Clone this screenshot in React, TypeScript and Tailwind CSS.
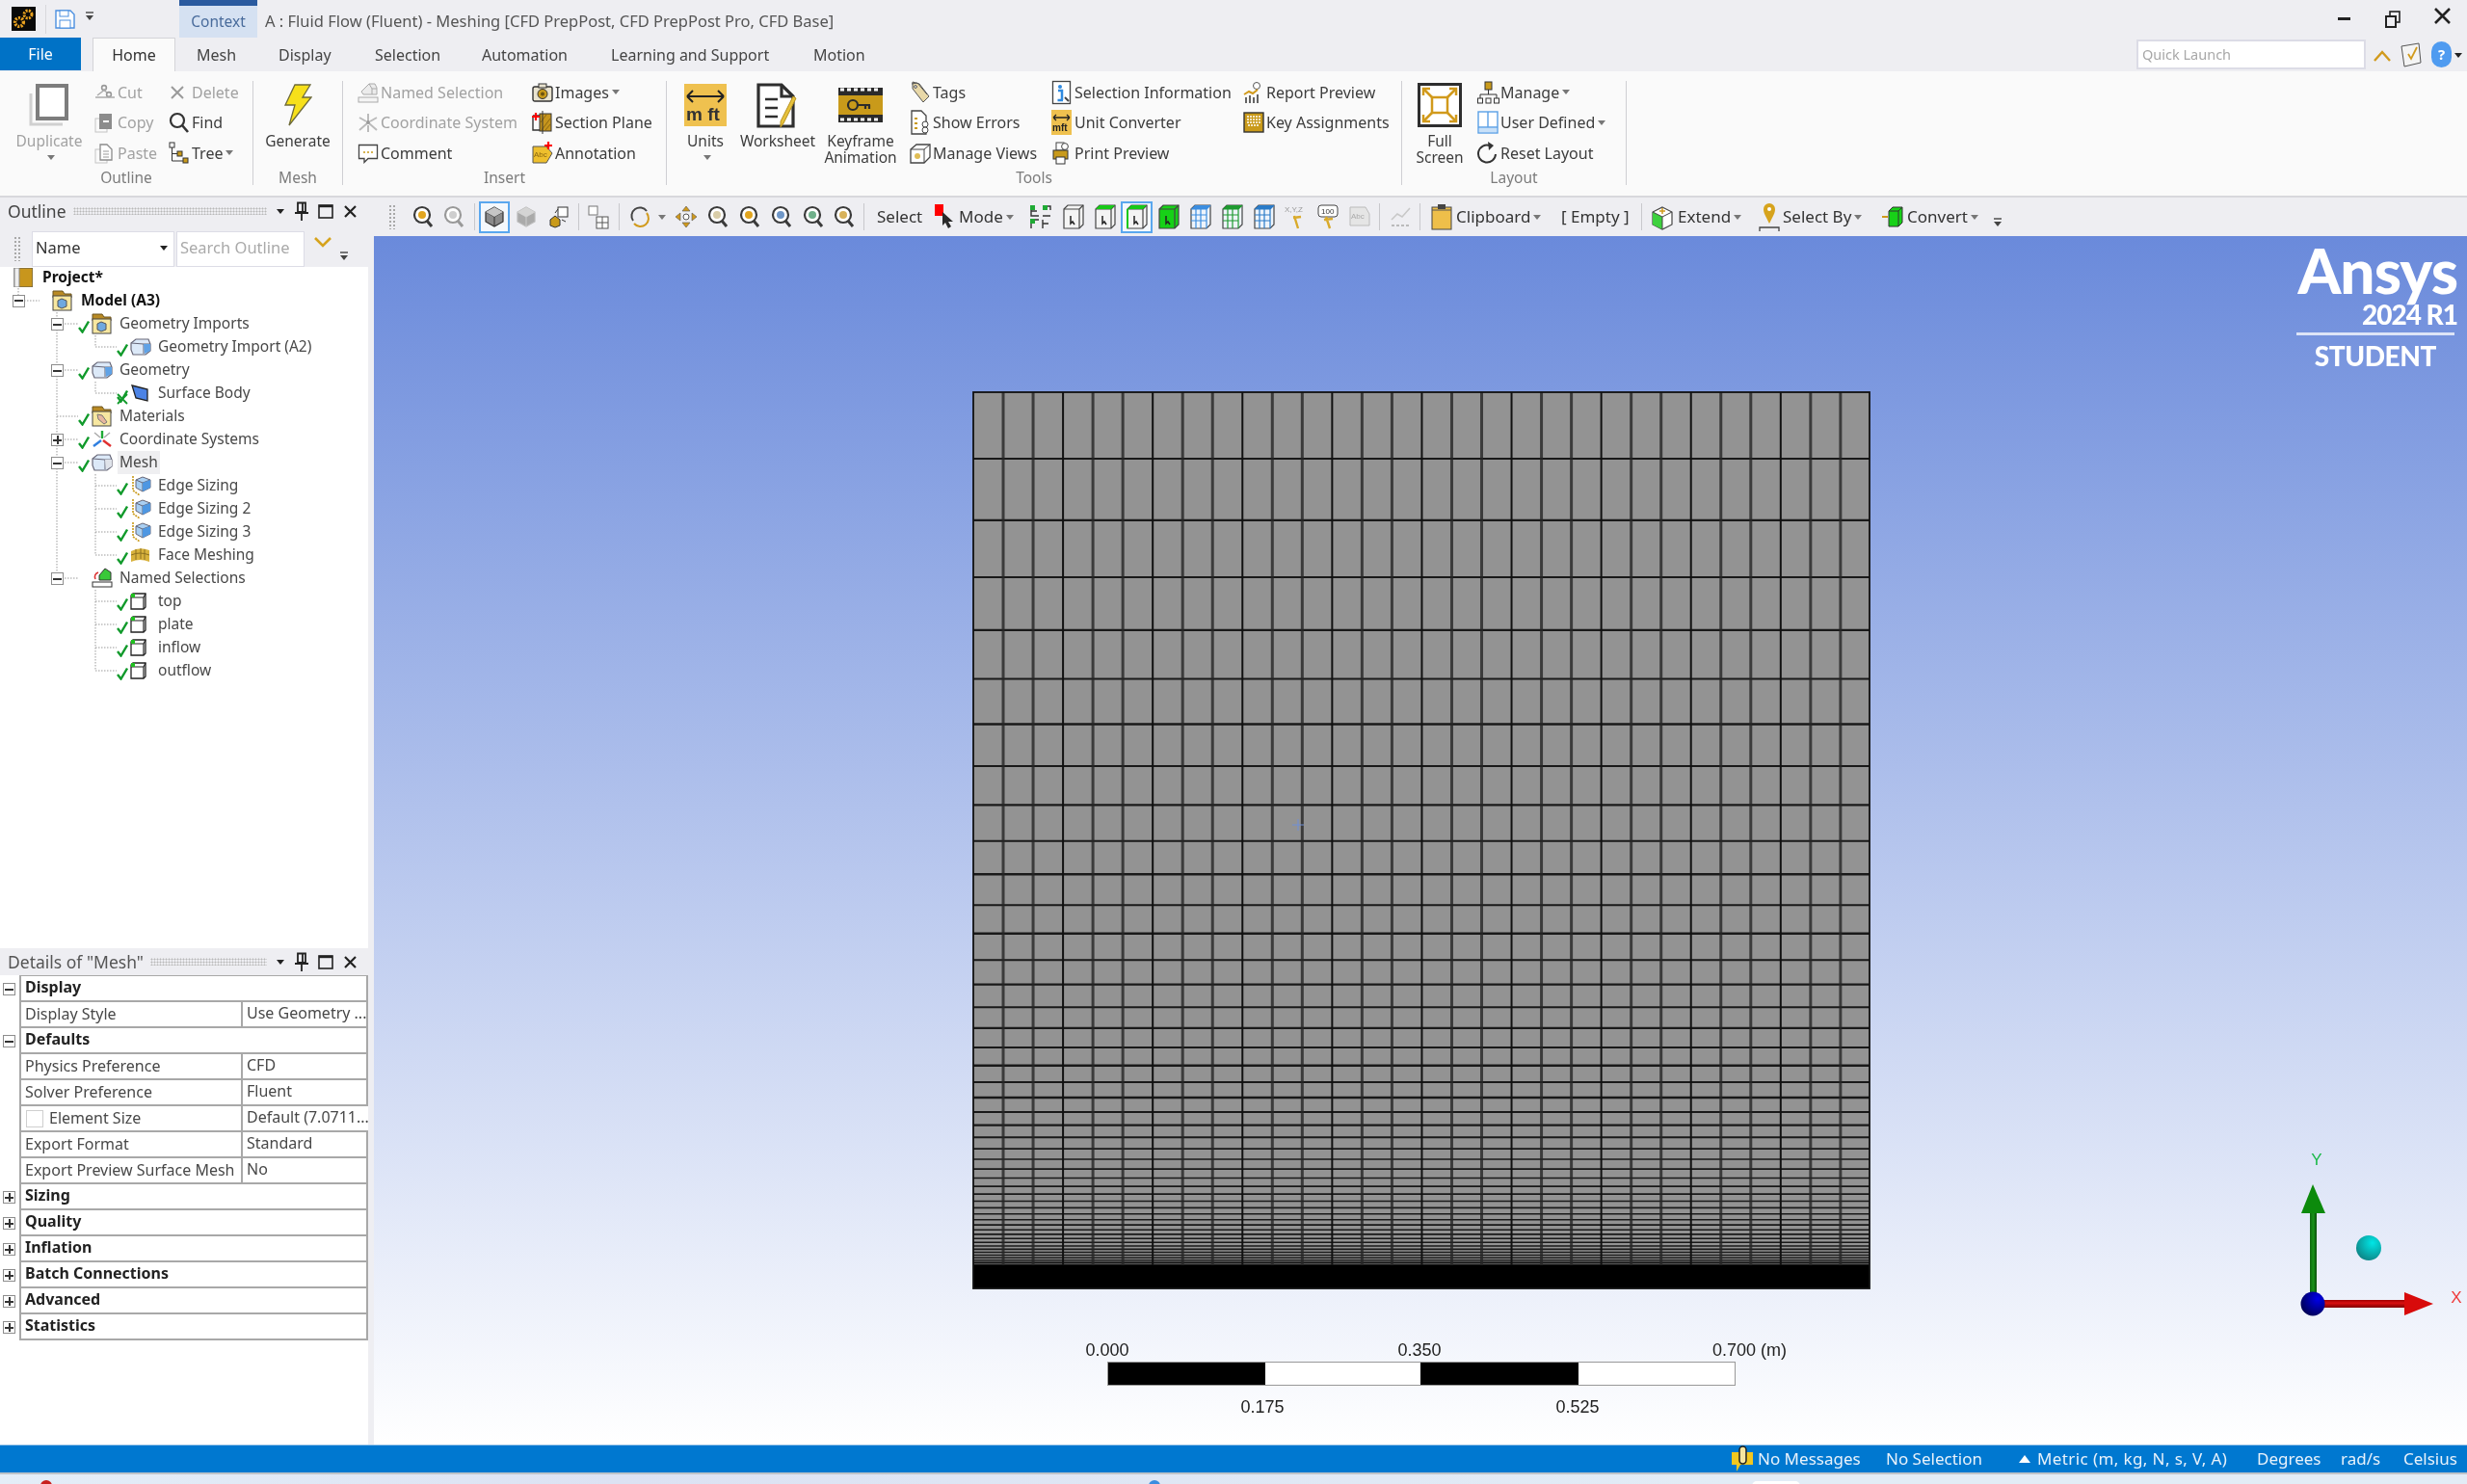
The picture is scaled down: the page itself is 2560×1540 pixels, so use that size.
import React from 'react';

type IconProps = { size?: number };

const Chk = () => (
  <svg width="12" height="14" viewBox="0 0 12 14" className="shrink-0">
    <path d="M1 8 L4.5 12.5 L11 1.5" fill="none" stroke="#119a2b" strokeWidth="2.4" />
  </svg>
);

const Arrow = ({ dark = false }: { dark?: boolean }) => (
  <svg width="8" height="5" viewBox="0 0 8 5" className="shrink-0 ml-[3px]">
    <path d="M0 0 H8 L4 5 Z" fill={dark ? '#222' : '#777'} />
  </svg>
);

// ---------- ribbon icons ----------
const CutIcon = () => (
  <svg width="22" height="20" viewBox="0 0 22 20">
    <circle cx="10" cy="5" r="2.4" fill="none" stroke="#999" strokeWidth="1.6" />
    <circle cx="15" cy="12" r="2.4" fill="none" stroke="#999" strokeWidth="1.6" />
    <path d="M3 13 L12 6 M9 7 L13 10 M1 15 H21" stroke="#aaa" strokeWidth="1.5" fill="none" />
  </svg>
);
const CopyIcon = () => (
  <svg width="20" height="22" viewBox="0 0 20 22">
    <rect x="1" y="7" width="12" height="14" fill="none" stroke="#c4c4c4" />
    <rect x="5" y="2" width="13" height="16" fill="#8c8c8c" />
    <rect x="9" y="9" width="6" height="2" fill="#fff" />
  </svg>
);
const PasteIcon = () => (
  <svg width="20" height="22" viewBox="0 0 20 22">
    <rect x="1" y="7" width="12" height="14" fill="none" stroke="#c4c4c4" />
    <path d="M6 2 H13 L18 7 V18 H6 Z" fill="#fff" stroke="#8c8c8c" strokeWidth="1.3" />
    <path d="M9 9 H15 M9 12 H15 M9 15 H15" stroke="#999" />
  </svg>
);
const DeleteIcon = () => (
  <svg width="18" height="18" viewBox="0 0 18 18">
    <path d="M3 3 L15 15 M15 3 L3 15" stroke="#9a9a9a" strokeWidth="2" />
  </svg>
);
const FindIcon = () => (
  <svg width="21" height="22" viewBox="0 0 21 22">
    <circle cx="9" cy="9" r="7" fill="none" stroke="#333" strokeWidth="2.2" />
    <path d="M14 14 L20 21" stroke="#333" strokeWidth="2.6" />
  </svg>
);
const TreeIcon = () => (
  <svg width="22" height="24" viewBox="0 0 22 24">
    <rect x="1" y="1" width="5" height="5" fill="#fff" stroke="#333" />
    <rect x="9" y="10" width="5" height="5" fill="#c99a1a" stroke="#333" />
    <rect x="15" y="17" width="5" height="5" fill="#c99a1a" stroke="#333" />
    <path d="M3.5 6 V12.5 H9 M3.5 12 V20 H15" fill="none" stroke="#333" />
  </svg>
);
const NamedSelIcon = ({ size = 22 }: IconProps) => (
  <svg width={size} height={size} viewBox="0 0 22 22">
    <path d="M4 10 L12 2 H18 L20 6 V13 H6 Z" fill="#ececec" stroke="#aaa" />
    <path d="M12 2 L15 7 H20 M15 7 V13" fill="none" stroke="#aaa" />
    <rect x="1" y="16" width="20" height="5" fill="#f4f4f4" stroke="#aaa" />
  </svg>
);
const CoordIcon = () => (
  <svg width="22" height="22" viewBox="0 0 22 22">
    <path d="M11 10 V2 M10 12 L2 19 M12 12 L20 19 M2 6 L9 10 M20 6 L13 10 M11 14 V21" stroke="#bbb" strokeWidth="2" />
    <circle cx="11" cy="11" r="2" fill="#999" />
  </svg>
);
const CommentIcon = () => (
  <svg width="22" height="22" viewBox="0 0 22 22">
    <path d="M1.5 2.5 H20.5 V16.5 H11 L7 20.5 V16.5 H1.5 Z" fill="#fff" stroke="#444" strokeWidth="1.3" />
    <path d="M6 10 H8 M10 10 H12 M14 10 H16" stroke="#c99a1a" strokeWidth="1.4" />
  </svg>
);
const ImagesIcon = () => (
  <svg width="22" height="20" viewBox="0 0 22 20">
    <rect x="1" y="4" width="20" height="15" rx="2" fill="#e9e3cf" stroke="#333" strokeWidth="1.4" />
    <rect x="7" y="1" width="8" height="4" fill="#e9e3cf" stroke="#333" />
    <circle cx="11" cy="11.5" r="5" fill="#c99a1a" stroke="#333" />
    <circle cx="11" cy="11.5" r="2" fill="#6b5310" />
  </svg>
);
const SectionIcon = () => (
  <svg width="22" height="24" viewBox="0 0 22 24">
    <path d="M1 5 H12 M1 5 V20 H12" fill="none" stroke="#333" strokeWidth="1.4" />
    <rect x="8" y="3" width="12" height="18" fill="#c6951d" stroke="#333" />
    <path d="M9 12 L15 4 M10 20 L19 8 M14 20 L19 14" stroke="#8a6610" />
    <path d="M11 0 V24" stroke="#333" />
    <path d="M4 2 V10 M0 6 H8" stroke="#f00" strokeWidth="2.2" />
  </svg>
);
const AnnotIcon = () => (
  <svg width="22" height="24" viewBox="0 0 22 24">
    <path d="M1 5 H15 L21 12 L15 22 H1 Z" fill="#eebf2d" stroke="#555" />
    <text x="2" y="16" fontSize="8" fill="#8a6610" fontFamily="Liberation Sans">Abc</text>
    <path d="M17 0 V8 M13 4 H21" stroke="#f00" strokeWidth="2.2" />
  </svg>
);
const TagsIcon = () => (
  <svg width="22" height="24" viewBox="0 0 22 24">
    <path d="M3 1 L10 3 L20 16 L14 22 L3 8 Z" fill="#e8d8a8" stroke="#555" />
    <path d="M2 3 L8 2 L18 14" fill="none" stroke="#555" />
    <circle cx="6" cy="6" r="1.4" fill="#fff" stroke="#555" />
  </svg>
);
const ErrorsIcon = () => (
  <svg width="22" height="26" viewBox="0 0 22 26">
    <path d="M2 1 H12 L17 6 V25 H2 Z" fill="#fff" stroke="#444" strokeWidth="1.3" />
    <path d="M5 9 H8 M5 14 H8 M5 19 H8" stroke="#c99a1a" strokeWidth="2" />
    <circle cx="16" cy="15" r="3" fill="#fff" stroke="#444" />
    <circle cx="16" cy="21" r="3" fill="#fff" stroke="#444" />
  </svg>
);
const ViewsIcon = () => (
  <svg width="22" height="22" viewBox="0 0 22 22">
    <path d="M1 7 L7 2 H21 V15 L15 21 H1 Z" fill="#fff" stroke="#444" strokeWidth="1.3" />
    <path d="M1 7 H15 V21 M15 7 L21 2" fill="none" stroke="#444" />
    <circle cx="8" cy="14" r="3" fill="#e0bd55" />
  </svg>
);
const InfoIcon = () => (
  <svg width="22" height="26" viewBox="0 0 22 26">
    <rect x="1.5" y="1.5" width="18" height="23" fill="#fff" stroke="#444" strokeWidth="1.3" />
    <circle cx="9" cy="7" r="2" fill="#2f8ae0" />
    <path d="M7 11 H11 V21 M6.5 21 H12" fill="none" stroke="#2f8ae0" strokeWidth="2.5" />
    <path d="M14 18 L18 22" stroke="#444" strokeWidth="2" />
  </svg>
);
const UnitSmallIcon = () => (
  <svg width="21" height="26" viewBox="0 0 21 26">
    <rect x="0" y="0" width="21" height="26" fill="#efc14f" />
    <path d="M2 8 H19 M2 8 L5 5 M2 8 L5 11 M19 8 L16 5 M19 8 L16 11" stroke="#222" strokeWidth="1.3" fill="none" />
    <text x="1" y="22" fontSize="10" fontWeight="700" fill="#222" fontFamily="Liberation Sans">mft</text>
  </svg>
);
const PrintIcon = () => (
  <svg width="22" height="26" viewBox="0 0 22 26">
    <rect x="5" y="2" width="8" height="8" fill="#fff" stroke="#444" />
    <circle cx="14" cy="6" r="3.4" fill="#fff" stroke="#444" />
    <rect x="2" y="10" width="15" height="9" fill="#c99a1a" stroke="#333" />
    <rect x="5" y="17" width="9" height="7" fill="#fff" stroke="#333" />
  </svg>
);
const ReportIcon = () => (
  <svg width="22" height="24" viewBox="0 0 22 24">
    <circle cx="14" cy="5" r="3.5" fill="#fff" stroke="#555" />
    <path d="M1 14 L6 11 L10 13 L15 9" fill="none" stroke="#d19a1c" strokeWidth="2" />
    <path d="M3 23 V17 M7 23 V15 M11 23 V17 M15 23 V14" stroke="#333" strokeWidth="1.5" />
  </svg>
);
const KeysIcon = () => (
  <svg width="22" height="22" viewBox="0 0 22 22">
    <rect x="1" y="1" width="20" height="20" fill="#c99a1a" stroke="#333" strokeWidth="1.4" />
    <path d="M4 5 H18 M4 8 H18 M4 11 H18 M5 14 H17" stroke="#fff" strokeWidth="1.3" strokeDasharray="2 1" />
  </svg>
);
const ManageIcon = () => (
  <svg width="23" height="24" viewBox="0 0 23 24">
    <rect x="8" y="1" width="7" height="8" fill="#c99a1a" stroke="#333" />
    <path d="M11.5 9 V14 M3 18 V14 H20 V18" fill="none" stroke="#333" />
    <rect x="0.5" y="18" width="5" height="5" fill="#fff" stroke="#333" />
    <rect x="9" y="18" width="5" height="5" fill="#fff" stroke="#333" />
    <rect x="17.5" y="18" width="5" height="5" fill="#fff" stroke="#333" />
  </svg>
);
const UserDefIcon = () => (
  <svg width="22" height="24" viewBox="0 0 22 24">
    <rect x="1" y="1" width="20" height="22" fill="#fff" stroke="#5aa0e6" strokeWidth="1.4" />
    <path d="M1 17 H21 M11 1 V17" stroke="#5aa0e6" strokeWidth="1.4" />
    <rect x="2" y="18" width="18" height="4" fill="#c8e0f8" />
  </svg>
);
const ResetIcon = () => (
  <svg width="22" height="24" viewBox="0 0 22 24">
    <path d="M13 4 A9 9 0 1 0 19 13" fill="none" stroke="#333" strokeWidth="2" />
    <path d="M11 0 L17 4 L12 9 Z" fill="#333" />
  </svg>
);
const DuplicateIcon = () => (
  <svg width="44" height="44" viewBox="0 0 44 44">
    <path d="M3 10 V42 H36" fill="none" stroke="#d0d0d0" strokeWidth="3" />
    <rect x="10" y="2" width="30" height="34" fill="#fff" stroke="#7d7d7d" strokeWidth="4" />
  </svg>
);
const BoltIcon = () => (
  <svg width="30" height="44" viewBox="0 0 30 44">
    <path d="M12 1 H28 L20 14 H29 L6 43 L12 22 H2 Z" fill="#f7e01a" stroke="#6d6a3a" strokeWidth="1.3" />
  </svg>
);
const UnitsIcon = () => (
  <svg width="44" height="44" viewBox="0 0 44 44">
    <rect width="44" height="44" fill="#efc14f" />
    <path d="M3 13 H41 M3 13 L9 7 M3 13 L9 19 M41 13 L35 7 M41 13 L35 19" stroke="#222" strokeWidth="2" fill="none" />
    <text x="2" y="38" fontSize="19" fontWeight="700" fill="#333" fontFamily="Liberation Sans">m ft</text>
  </svg>
);
const WorksheetIcon = () => (
  <svg width="44" height="47" viewBox="0 0 44 47">
    <path d="M2 2 H26 L38 14 V45 H2 Z" fill="#fff" stroke="#2e2e2e" strokeWidth="3.2" />
    <path d="M26 2 V14 H38" fill="none" stroke="#2e2e2e" strokeWidth="3.2" />
    <path d="M9 17 H22 M9 26 H22 M9 35 H22" stroke="#2e2e2e" strokeWidth="2.6" />
    <path d="M41 16 L28 42 L25 46 L25 40 L38 14 Z" fill="#e7c23c" stroke="#b58f1e" />
  </svg>
);
const KeyframeIcon = () => (
  <svg width="46" height="36" viewBox="0 0 46 36">
    <rect width="46" height="36" fill="#2b2b2b" />
    <rect x="0" y="8" width="46" height="20" fill="#c99a1a" />
    <path d="M2 2 H44 M2 33 H44" stroke="#fff" strokeWidth="3" strokeDasharray="4 3" />
    <circle cx="15" cy="18" r="5" fill="none" stroke="#2b2b2b" strokeWidth="2.2" />
    <path d="M20 18 H33 M28 18 V22 M32 18 V22" stroke="#2b2b2b" strokeWidth="2.2" />
  </svg>
);
const FullIcon = () => (
  <svg width="46" height="46" viewBox="0 0 46 46">
    <rect x="1.5" y="1.5" width="43" height="43" fill="#fff" stroke="#2e2e2e" strokeWidth="3" />
    <rect x="15" y="15" width="16" height="16" fill="none" stroke="#d19a1c" strokeWidth="2.5" />
    <path d="M15 15 L7 7 M31 15 L39 7 M15 31 L7 39 M31 31 L39 39" stroke="#d19a1c" strokeWidth="2.5" />
    <path d="M6 13 V6 H13 M33 6 H40 V13 M6 33 V40 H13 M33 40 H40 V33" fill="none" stroke="#d19a1c" strokeWidth="2.5" />
  </svg>
);
const GearLogo = () => (
  <svg width="25" height="25" viewBox="0 0 25 25">
    <rect width="25" height="25" fill="#0a0a0a" />
    <circle cx="17" cy="8" r="4" fill="none" stroke="#e9a21f" strokeWidth="3" strokeDasharray="2 1.2" />
    <circle cx="8" cy="16" r="4.4" fill="none" stroke="#e9a21f" strokeWidth="3.4" strokeDasharray="2 1.2" />
  </svg>
);
const SaveIcon = () => (
  <svg width="21" height="20" viewBox="0 0 21 20">
    <path d="M1 1 H16 L20 5 V19 H1 Z" fill="#fff" stroke="#4b8fe0" strokeWidth="1.4" />
    <rect x="5" y="1" width="9" height="6" fill="#fff" stroke="#4b8fe0" />
    <rect x="5" y="11" width="11" height="8" fill="#fff" stroke="#4b8fe0" />
  </svg>
);
const SmallCaret = () => (
  <svg width="10" height="10" viewBox="0 0 10 10">
    <path d="M1 1 H9" stroke="#444" strokeWidth="1.4" />
    <path d="M1 4 H9 L5 9 Z" fill="#444" />
  </svg>
);

// ---------- view toolbar icons ----------
const Mag = ({ c = '#d19a1c', muted = false }: { c?: string; muted?: boolean }) => (
  <svg width="22" height="24" viewBox="0 0 22 24">
    <circle cx="10" cy="10" r="8" fill="#fff" stroke={muted ? '#999' : '#3a3a3a'} strokeWidth="2.2" />
    <circle cx="10" cy="10" r="4" fill={c} />
    <path d="M15 16 L20 22" stroke={muted ? '#999' : '#3a3a3a'} strokeWidth="3" />
  </svg>
);
const CubeTb = ({ fill = '#8a8a8a', light = false }: { fill?: string; light?: boolean }) => (
  <svg width="22" height="24" viewBox="0 0 22 24">
    <path d="M11 2 L20 7 V17 L11 22 L2 17 V7 Z" fill={fill} stroke={light ? '#bbb' : '#333'} strokeWidth="1.2" />
    <path d="M2 7 L11 12 L20 7 M11 12 V22" fill="none" stroke={light ? '#ccc' : '#333'} strokeWidth="1" />
    <path d="M11 2 L20 7 L11 12 L2 7 Z" fill={light ? '#d4d4d4' : '#c6c6c6'} />
  </svg>
);
const CubesTb = () => (
  <svg width="22" height="24" viewBox="0 0 22 24">
    <rect x="10" y="2" width="10" height="10" fill="#fff" stroke="#333" />
    <path d="M2 15 L7 11 L12 15 V21 L7 23 L2 21 Z" fill="#c99a1a" stroke="#333" />
    <path d="M7 8 L10 4 M14 15 L18 17" stroke="#333" />
  </svg>
);
const ViewSelTb = () => (
  <svg width="22" height="26" viewBox="0 0 22 26">
    <rect x="1" y="2" width="9" height="9" fill="#fff" stroke="#777" />
    <rect x="9" y="13" width="12" height="12" fill="#fff" stroke="#555" />
    <path d="M15 13 V25 M9 19 H21" stroke="#555" />
  </svg>
);
const RotateTb = () => (
  <svg width="22" height="24" viewBox="0 0 22 24">
    <path d="M4 16 A8.5 8.5 0 0 1 18 6" fill="none" stroke="#444" strokeWidth="2" />
    <path d="M18 8 A8.5 8.5 0 0 1 5 19" fill="none" stroke="#d19a1c" strokeWidth="2" />
  </svg>
);
const PanTb = () => (
  <svg width="22" height="24" viewBox="0 0 22 24">
    <path d="M11 1 L15 6 H7 Z M11 23 L15 18 H7 Z M0 12 L5 8 V16 Z M22 12 L17 8 V16 Z" fill="#d19a1c" stroke="#555" strokeWidth="0.6" />
    <circle cx="11" cy="12" r="3" fill="#fff" stroke="#555" />
  </svg>
);
const ModeIcon = () => (
  <svg width="22" height="26" viewBox="0 0 22 26">
    <rect x="0" y="0" width="9" height="12" fill="#f00" />
    <path d="M8 8 V22 L11 19 L14 25 L17 23 L14 18 H19 Z" fill="#2a2a2a" />
  </svg>
);
const SelGrid = () => (
  <svg width="24" height="26" viewBox="0 0 24 26">
    <path d="M2 2 V12 H10 M2 7 H8 M14 2 H22 V6 M14 12 H22 M2 16 H10 M2 16 V25 M14 16 V25 M14 20 H20" fill="none" stroke="#333" strokeWidth="1.4" />
    <rect x="1" y="1" width="5" height="5" fill="#1faa35" />
    <rect x="14" y="1" width="5" height="5" fill="#1faa35" />
    <rect x="1" y="15" width="5" height="5" fill="#1faa35" />
  </svg>
);
const CubeSel = ({ top = false, green = false, edge = false }: { top?: boolean; green?: boolean; edge?: boolean }) => (
  <svg width="22" height="26" viewBox="0 0 22 26">
    <path d="M1 5 L5 1 H21 V21 L17 25 H1 Z" fill={green ? '#17d117' : '#f4f4f4'} stroke="#444" strokeWidth="1.2" />
    <path d="M1 5 H17 V25 M17 5 L21 1" fill="none" stroke="#444" strokeWidth="1.2" />
    {top && <path d="M1 5 L5 1 H21 L17 5 Z" fill="#17c917" />}
    {edge && <path d="M1 5 V25" stroke="#17c917" strokeWidth="2" />}
    <path d="M8 12 V20 L10 18 L12 21" fill="none" stroke="#222" strokeWidth="1.5" />
  </svg>
);
const CubeMesh = ({ c = '#3b8de0' }: { c?: string }) => (
  <svg width="22" height="26" viewBox="0 0 22 26">
    <path d="M1 5 L5 1 H21 V21 L17 25 H1 Z" fill="#eef4fb" stroke="#444" strokeWidth="1.2" />
    <path d="M1 5 H17 V25 M17 5 L21 1 M6 5 V25 M11 5 V25 M1 11 H17 M1 17 H17" fill="none" stroke={c} strokeWidth="1.2" />
    <path d="M1 5 L5 1 H21 L17 5 Z" fill={c} />
  </svg>
);
const XyzIcon = () => (
  <svg width="24" height="26" viewBox="0 0 24 26">
    <text x="0" y="8" fontSize="8" fill="#999" fontFamily="Liberation Sans">X,Y,Z</text>
    <path d="M10 12 L14 25 M9 14 L17 13" stroke="#d9aa2b" strokeWidth="2.4" />
  </svg>
);
const ProbeIcon = () => (
  <svg width="24" height="26" viewBox="0 0 24 26">
    <rect x="2" y="1" width="20" height="12" rx="3" fill="#fff" stroke="#444" />
    <text x="5" y="10" fontSize="8" fill="#333" fontFamily="Liberation Sans">100</text>
    <path d="M10 13 L14 25 M8 16 L17 15" stroke="#d9aa2b" strokeWidth="2.4" />
  </svg>
);
const AbcIcon = () => (
  <svg width="24" height="26" viewBox="0 0 24 26">
    <path d="M2 3 H18 L22 10 V22 H2 Z" fill="#e5e5e5" stroke="#bbb" />
    <text x="3" y="15" fontSize="8" fill="#aaa" fontFamily="Liberation Sans">Abc</text>
  </svg>
);
const ChartIcon = () => (
  <svg width="24" height="24" viewBox="0 0 24 24">
    <path d="M2 15 L8 9 L13 12 L21 3" fill="none" stroke="#c8c8c8" strokeWidth="1.6" />
    <path d="M2 21 H22" stroke="#bbb" strokeDasharray="3 2" strokeWidth="2" />
  </svg>
);
const ClipboardIcon = () => (
  <svg width="22" height="27" viewBox="0 0 22 27">
    <rect x="1" y="3" width="20" height="23" fill="#eebf4a" stroke="#444" />
    <rect x="7" y="0" width="8" height="5" fill="#444" />
    <path d="M1 6 H21" stroke="#555" />
  </svg>
);
const ExtendIcon = () => (
  <svg width="22" height="28" viewBox="0 0 22 28">
    <path d="M11 4 L21 9 V22 L11 27 L1 22 V9 Z" fill="#fff" stroke="#444" strokeWidth="1.2" />
    <path d="M1 9 L11 14 V27 L1 22 Z" fill="#3ed13e" />
    <path d="M1 9 L11 14 L21 9 M11 14 V27" fill="none" stroke="#444" />
    <path d="M11 5 V11 M8 8 H14" stroke="#d19a1c" strokeWidth="1.5" />
  </svg>
);
const PinGold = () => (
  <svg width="22" height="30" viewBox="0 0 22 30">
    <path d="M11 22 C7 14 5 11 5 7 A6 6 0 0 1 17 7 C17 11 15 14 11 22 Z" fill="#d6a31d" />
    <circle cx="11" cy="7" r="2" fill="#fff" />
    <path d="M1 30 V26 H21 V30" fill="none" stroke="#444" strokeWidth="1.3" />
  </svg>
);
const ConvertIcon = () => (
  <svg width="22" height="24" viewBox="0 0 22 24">
    <path d="M0 12 H6" stroke="#d19a1c" strokeWidth="2" />
    <path d="M7 6 L11 2 H21 V18 L17 22 H7 Z" fill="#17d117" stroke="#333" />
    <path d="M7 6 H17 V22 M17 6 L21 2" fill="none" stroke="#333" />
  </svg>
);
const PinIcon = () => (
  <svg width="14" height="20" viewBox="0 0 14 20">
    <path d="M3 1.5 H11 V11 H3 Z M0 12 H14 M7 12 V20 M8 2 V11" fill="none" stroke="#222" strokeWidth="1.8" />
  </svg>
);
const MaxIcon = () => (
  <svg width="16" height="16" viewBox="0 0 16 16">
    <rect x="1" y="2" width="14" height="13" fill="none" stroke="#222" strokeWidth="1.6" />
    <path d="M1 3 H15" stroke="#222" strokeWidth="2.4" />
  </svg>
);
const CloseIcon = () => (
  <svg width="13" height="13" viewBox="0 0 13 13">
    <path d="M1 1 L12 12 M12 1 L1 12" stroke="#222" strokeWidth="2.2" />
  </svg>
);

// ---------- tree icons ----------
const Cube = ({ c = '#5fa2e6' }: { c?: string }) => (
  <svg width="22" height="20" viewBox="0 0 22 20">
    <path d="M6 2 H19 L21 7 V14 L16 18 H3 L1 13 V6 Z" fill="#dce9f8" stroke="#667" strokeWidth="1.2" />
    <path d="M1 6 L14 7 L21 7 M14 7 V17" fill="none" stroke="#667" />
    <path d="M14 7 H21 V14 L15 17 Z" fill={c} />
  </svg>
);
const FolderCube = ({ mark = 'cube' }: { mark?: 'cube' | 'tag' }) => (
  <svg width="21" height="22" viewBox="0 0 21 22">
    <path d="M1 1 H11 L13 4 H20 V8 H1 Z" fill="#b98a24" stroke="#6a5520" />
    <rect x="1" y="6" width="19" height="15" fill="#f7e7a0" stroke="#444" />
    {mark === 'cube' ? (
      <path d="M6 11 L10 9 L15 11 V17 L10 19 L6 17 Z" fill="#6ea8e0" stroke="#555" />
    ) : (
      <path d="M6 9 L11 10 L16 17 L13 19 L7 14 Z" fill="#e7b7a0" stroke="#777" />
    )}
  </svg>
);
const Edge = () => (
  <svg width="22" height="22" viewBox="0 0 22 22">
    <path d="M3 1 V16 L10 21" fill="none" stroke="#c99a1a" strokeWidth="1.6" strokeDasharray="2 1" />
    <path d="M13 2 L21 5 V13 L13 17 L6 13 V5 Z" fill="#a9cff2" stroke="#667" />
    <path d="M6 5 L13 8 L21 5 M13 8 V17" fill="none" stroke="#667" />
    <path d="M13 8 L21 5 V13 L13 17 Z" fill="#4e97e2" />
  </svg>
);
const FaceMesh = () => (
  <svg width="21" height="16" viewBox="0 0 21 16">
    <path d="M1 4 Q10 -1 20 3 V15 Q10 11 1 15 Z" fill="#d8b23c" />
    <path d="M6 2 V13 M11 1 V12 M15 2 V13 M1 8 Q10 4 20 8" stroke="#8c7020" fill="none" />
  </svg>
);
const NamedFace = () => (
  <svg width="18" height="18" viewBox="0 0 18 18">
    <path d="M1 3 L3 1 H16 V15 L14 17 H1 Z" fill="#fff" stroke="#222" strokeWidth="1.3" />
    <path d="M1 5 H14 V17 M14 5 L16 1" fill="none" stroke="#222" strokeWidth="1.2" />
    <rect x="1" y="1" width="4" height="4" fill="#20c020" />
  </svg>
);

const Expander = ({ open = true }: { open?: boolean }) => (
  <span className="w-[13px] h-[13px] border border-[#8d8d8d] bg-white flex items-center justify-center shrink-0">
    <span className="relative w-[9px] h-[2px] bg-[#333]">
      {!open && <span className="absolute left-[3.5px] -top-[3.5px] w-[2px] h-[9px] bg-[#333]" />}
    </span>
  </span>
);

const Grip = () => (
  <div className="w-[9px] h-[26px] bg-[radial-gradient(#a8a8a8_1px,transparent_1.2px)] bg-[length:4px_4px]" />
);

const PaneHeader = ({ title, dark = false }: { title: string; dark?: boolean }) => (
  <div className="h-[28px] flex items-center bg-[#eeeef2] pl-[8px] shrink-0">
    <span className={`text-[17.5px] whitespace-nowrap ${dark ? 'text-[#444]' : 'text-[#555]'}`}>{title}</span>
    <div className="flex-1 h-[8px] mx-[7px] bg-[radial-gradient(#b8b8b8_0.9px,transparent_1.1px)] bg-[length:3px_3px]" />
    <Arrow dark />
    <div className="w-[24px] flex justify-center ml-[6px]"><PinIcon /></div>
    <div className="w-[26px] flex justify-center"><MaxIcon /></div>
    <div className="w-[24px] mr-[7px] flex justify-center"><CloseIcon /></div>
  </div>
);

// ---------- ribbon ----------
const Small = ({ icon, label, off = false, arrow = false }: { icon: React.ReactNode; label: string; off?: boolean; arrow?: boolean }) => (
  <div className="h-[31.5px] flex items-center whitespace-nowrap text-[16px]">
    <div className="w-[24px] h-[30px] flex items-center shrink-0">{icon}</div>
    <span className={off ? 'text-[#a2a2a2]' : 'text-[#3d3d3d]'}>{label}</span>
    {arrow && <Arrow />}
  </div>
);

const Big = ({ icon, lines, width, off = false, arrow = false }: { icon: React.ReactNode; lines: string[]; width: string; off?: boolean; arrow?: boolean }) => (
  <div className={`${width} flex flex-col items-center shrink-0 leading-[17px] ${off ? 'text-[#a2a2a2]' : 'text-[#3d3d3d]'}`}>
    <div className="h-[58px] flex items-center justify-center">{icon}</div>
    {lines.map((l) => (
      <span key={l} className="whitespace-nowrap">{l}</span>
    ))}
    {arrow && <div className="mt-[6px]"><Arrow /></div>}
  </div>
);

const Group = ({ width, label, children }: { width: string; label: string; children: React.ReactNode }) => (
  <div className={`${width} flex flex-col shrink-0`}>
    <div className="h-[96px] flex">{children}</div>
    <div className="h-[16px] leading-[16px] text-center text-[#7c7c7c]">{label}</div>
  </div>
);

const RibbonSep = () => <div className="w-px h-[108px] mt-[4px] bg-[#cfcfd3] shrink-0" />;

const Ribbon = () => (
  <div className="h-[131px] bg-[#fafafa] border-b-2 border-[#d8d8dc] flex pt-[6px] text-[15.5px] shrink-0">
    <Group width="w-[262px]" label="Outline">
      <div className="pl-[12px]">
        <Big width="w-[78px]" icon={<DuplicateIcon />} lines={['Duplicate']} off arrow />
      </div>
      <div className="ml-[8px] w-[77px]">
        <Small icon={<CutIcon />} label="Cut" off />
        <Small icon={<CopyIcon />} label="Copy" off />
        <Small icon={<PasteIcon />} label="Paste" off />
      </div>
      <div>
        <Small icon={<DeleteIcon />} label="Delete" off />
        <Small icon={<FindIcon />} label="Find" />
        <Small icon={<TreeIcon />} label="Tree" arrow />
      </div>
    </Group>
    <RibbonSep />
    <Group width="w-[92px]" label="Mesh">
      <Big width="w-[92px]" icon={<BoltIcon />} lines={['Generate']} />
    </Group>
    <RibbonSep />
    <Group width="w-[335px]" label="Insert">
      <div className="ml-[15px] w-[181px]">
        <Small icon={<NamedSelIcon />} label="Named Selection" off />
        <Small icon={<CoordIcon />} label="Coordinate System" off />
        <Small icon={<CommentIcon />} label="Comment" />
      </div>
      <div>
        <Small icon={<ImagesIcon />} label="Images" arrow />
        <Small icon={<SectionIcon />} label="Section Plane" />
        <Small icon={<AnnotIcon />} label="Annotation" />
      </div>
    </Group>
    <RibbonSep />
    <Group width="w-[762px]" label="Tools">
      <Big width="w-[80px]" icon={<UnitsIcon />} lines={['Units']} arrow />
      <Big width="w-[70px]" icon={<WorksheetIcon />} lines={['Worksheet']} />
      <Big width="w-[102px]" icon={<KeyframeIcon />} lines={['Keyframe', 'Animation']} />
      <div className="w-[147px]">
        <Small icon={<TagsIcon />} label="Tags" />
        <Small icon={<ErrorsIcon />} label="Show Errors" />
        <Small icon={<ViewsIcon />} label="Manage Views" />
      </div>
      <div className="w-[199px]">
        <Small icon={<InfoIcon />} label="Selection Information" />
        <Small icon={<UnitSmallIcon />} label="Unit Converter" />
        <Small icon={<PrintIcon />} label="Print Preview" />
      </div>
      <div>
        <Small icon={<ReportIcon />} label="Report Preview" />
        <Small icon={<KeysIcon />} label="Key Assignments" />
      </div>
    </Group>
    <RibbonSep />
    <Group width="w-[232px]" label="Layout">
      <Big width="w-[78px]" icon={<FullIcon />} lines={['Full', 'Screen']} />
      <div>
        <Small icon={<ManageIcon />} label="Manage" arrow />
        <Small icon={<UserDefIcon />} label="User Defined" arrow />
        <Small icon={<ResetIcon />} label="Reset Layout" />
      </div>
    </Group>
    <RibbonSep />
  </div>
);

// ---------- tree ----------
type Row = { label: string; level: number; icon: React.ReactNode; check?: boolean; exp?: 'open' | 'closed'; hi?: boolean; x?: boolean };
const rows: Row[] = [
  { label: 'Geometry Imports', level: 2, icon: <FolderCube />, check: true, exp: 'open' },
  { label: 'Geometry Import (A2)', level: 3, icon: <Cube />, check: true },
  { label: 'Geometry', level: 2, icon: <Cube />, check: true, exp: 'open' },
  { label: 'Surface Body', level: 3, icon: <svg width="20" height="18" viewBox="0 0 20 18"><path d="M2 1 L18 5 V17 L6 14 Z" fill="#4c83e6" stroke="#222" strokeWidth="1.3" /></svg>, check: true, x: true },
  { label: 'Materials', level: 2, icon: <FolderCube mark="tag" />, check: true },
  { label: 'Coordinate Systems', level: 2, icon: <svg width="22" height="22" viewBox="0 0 22 22"><path d="M11 10 V2" stroke="#1faa35" strokeWidth="2.4" /><path d="M10 12 L2 18" stroke="#2f7fe0" strokeWidth="2.4" /><path d="M12 12 L20 18" stroke="#e03030" strokeWidth="2.4" /><path d="M3 4 L9 9 M19 4 L13 9" stroke="#aaa" strokeWidth="1.5" /></svg>, check: true, exp: 'closed' },
  { label: 'Mesh', level: 2, icon: <Cube c="#dfe3ea" />, check: true, exp: 'open', hi: true },
  { label: 'Edge Sizing', level: 3, icon: <Edge />, check: true },
  { label: 'Edge Sizing 2', level: 3, icon: <Edge />, check: true },
  { label: 'Edge Sizing 3', level: 3, icon: <Edge />, check: true },
  { label: 'Face Meshing', level: 3, icon: <FaceMesh />, check: true },
  { label: 'Named Selections', level: 2, icon: <svg width="22" height="22" viewBox="0 0 22 22"><path d="M8 8 L14 1 L20 5 V13 H8 Z" fill="#39c939" stroke="#333" /><path d="M4 12 Q2 7 7 5" fill="none" stroke="#d33" strokeWidth="1.5" /><rect x="1" y="15" width="20" height="5" fill="#fff" stroke="#333" /></svg>, exp: 'open' },
  { label: 'top', level: 3, icon: <NamedFace />, check: true },
  { label: 'plate', level: 3, icon: <NamedFace />, check: true },
  { label: 'inflow', level: 3, icon: <NamedFace />, check: true },
  { label: 'outflow', level: 3, icon: <NamedFace />, check: true },
];

const TreeLines = () => (
  <svg width="200" height="440" viewBox="0 277 200 440" className="absolute left-0 top-0">
    <path
      d="M19 296 V306 M25 312 H41 M59 324 V597 M64 336 H81 M64 384 H81 M59 432 H81 M64 456 H81 M64 480 H81 M64 600 H81 M99 348 V360 H121 M99 396 V408 H121 M99 492 V576 M99 504 H121 M99 528 H121 M99 552 H121 M99 576 H121 M99 612 V696 M99 624 H121 M99 648 H121 M99 672 H121 M99 696 H121"
      fill="none"
      stroke="#9a9a9a"
      strokeDasharray="1.5 1.5"
    />
  </svg>
);

const TreeRow = ({ r }: { r: Row }) => (
  <div className="relative h-[24px] flex items-center whitespace-nowrap text-[#484848]">
    {r.level === 2 ? (
      <>
        <div className="absolute left-[53px] top-[6px]">{r.exp && <Expander open={r.exp === 'open'} />}</div>
        <div className="w-[14px] ml-[81px] pt-[5px] shrink-0">{r.check && <Chk />}</div>
        <div className="w-[27px] flex justify-start">{r.icon}</div>
      </>
    ) : (
      <>
        <div className="w-[121px] shrink-0" />
        <div className="w-[14px] pt-[5px] shrink-0 relative">
          <Chk />
          {r.x && <svg width="12" height="12" viewBox="0 0 12 12" className="absolute left-0 top-[9px]"><path d="M1 1 L11 11 M11 1 L1 11" stroke="#119a2b" strokeWidth="1.8" /></svg>}
        </div>
        <div className="w-[27px] flex justify-start">{r.icon}</div>
      </>
    )}
    <span className={`px-[2px] ${r.hi ? 'bg-[#efeff1]' : ''}`}>{r.label}</span>
  </div>
);

const OutlineTree = () => (
  <div className="relative flex-1 bg-white text-[15.5px]">
    <TreeLines />
    <div className="relative">
      <div className="h-[24px] flex items-center pl-[14px] gap-[10px] font-bold text-[#111] mt-[-1px]">
        <svg width="20" height="20" viewBox="0 0 20 20"><rect x="1" y="0" width="19" height="20" fill="#c8961d" stroke="#555" /><rect x="1" y="0" width="5" height="20" fill="#eee" stroke="#888" /></svg>
        <span>Project*</span>
      </div>
      <div className="h-[24px] flex items-center font-bold text-[#111]">
        <div className="ml-[13px] w-[41px]"><Expander /></div>
        <FolderCube />
        <span className="ml-[9px]">Model (A3)</span>
      </div>
      {rows.map((r) => <TreeRow key={r.label} r={r} />)}
    </div>
  </div>
);

// ---------- details ----------
const DetailHead = ({ label, open = false }: { label: string; open?: boolean }) => (
  <div className="flex h-[27px]">
    <div className="w-[20px] shrink-0 pl-[3px] pt-[7px]"><Expander open={open} /></div>
    <div className="flex-1 border-b-2 border-x-2 border-[#a8a8a8] pl-[4px] font-bold text-[#222] leading-[23px] bg-white">{label}</div>
  </div>
);
const DetailRow = ({ name, value, check = false }: { name: string; value: string; check?: boolean }) => (
  <div className="flex h-[27px]">
    <div className="w-[20px] shrink-0" />
    <div className="flex-1 flex border-b-2 border-x-2 border-[#a8a8a8] text-[#484848] leading-[23px] bg-white whitespace-nowrap">
      <div className="w-[230px] shrink-0 pl-[4px] border-r-2 border-[#a8a8a8] flex items-center">
        {check && <span className="w-[18px] h-[18px] border border-[#cfcfcf] bg-white ml-px mr-[6px]" />}
        {name}
      </div>
      <div className="flex-1 pl-[4px] overflow-hidden">{value}</div>
    </div>
  </div>
);

const Details = () => (
  <div className="bg-white h-[515px] shrink-0 flex flex-col text-[16px]">
    <PaneHeader title={'Details of "Mesh"'} />
    <div>
      <div className="ml-[20px] h-px bg-[#a8a8a8]" />
      <DetailHead label="Display" open />
      <DetailRow name="Display Style" value="Use Geometry ..." />
      <DetailHead label="Defaults" open />
      <DetailRow name="Physics Preference" value="CFD" />
      <DetailRow name="Solver Preference" value="Fluent" />
      <DetailRow name="Element Size" value="Default (7.0711..." check />
      <DetailRow name="Export Format" value="Standard" />
      <DetailRow name="Export Preview Surface Mesh" value="No" />
      <DetailHead label="Sizing" />
      <DetailHead label="Quality" />
      <DetailHead label="Inflation" />
      <DetailHead label="Batch Connections" />
      <DetailHead label="Advanced" />
      <DetailHead label="Statistics" />
    </div>
  </div>
);

// ---------- view toolbar ----------
const Tb = ({ w, children, sel = false }: { w: string; children: React.ReactNode; sel?: boolean }) => (
  <div className={`${w} h-[33px] flex items-center justify-center shrink-0 ${sel ? 'border-2 border-[#5aa7ee] bg-[#f4f8fc]' : ''}`}>{children}</div>
);
const TbSep = ({ m }: { m: string }) => <div className={`w-px h-[28px] bg-[#c8c8cc] shrink-0 ${m}`} />;

const ViewToolbar = () => (
  <div className="h-[40px] flex items-center bg-[#eeeef2] text-[17px] text-[#333] whitespace-nowrap shrink-0">
    <div className="ml-[15px] mr-[11px]"><Grip /></div>
    <Tb w="w-[32px]"><Mag c="#e2a51e" /></Tb>
    <Tb w="w-[31px]"><Mag c="#cfcfcf" muted /></Tb>
    <TbSep m="ml-[6px] mr-[4px]" />
    <Tb w="w-[32px]" sel><CubeTb /></Tb>
    <Tb w="w-[34px]"><CubeTb fill="#aaa" light /></Tb>
    <Tb w="w-[34px]"><CubesTb /></Tb>
    <TbSep m="ml-[3px] mr-[4px]" />
    <Tb w="w-[32px]"><ViewSelTb /></Tb>
    <TbSep m="ml-[5px] mr-[5px]" />
    <Tb w="w-[32px]"><RotateTb /></Tb>
    <div className="w-[16px] flex"><Arrow /></div>
    <Tb w="w-[32px]"><PanTb /></Tb>
    <Tb w="w-[33px]"><Mag c="#d9cda8" /></Tb>
    <Tb w="w-[33px]"><Mag c="#e2a51e" /></Tb>
    <Tb w="w-[33px]"><Mag c="#6f97c8" /></Tb>
    <Tb w="w-[33px]"><Mag c="#6fb08a" /></Tb>
    <Tb w="w-[32px]"><Mag c="#d8b25a" /></Tb>
    <TbSep m="ml-[4px] mr-[13px]" />
    <span className="w-[60px]">Select</span>
    <div className="w-[25px]"><ModeIcon /></div>
    <div className="w-[68px] flex items-center"><span>Mode</span><Arrow /></div>
    <Tb w="w-[34px]"><SelGrid /></Tb>
    <Tb w="w-[33px]"><CubeSel /></Tb>
    <Tb w="w-[33px]"><CubeSel top /></Tb>
    <Tb w="w-[33px]" sel><CubeSel top edge /></Tb>
    <Tb w="w-[33px]"><CubeSel green /></Tb>
    <Tb w="w-[33px]"><CubeMesh /></Tb>
    <Tb w="w-[33px]"><CubeMesh c="#1e9a30" /></Tb>
    <Tb w="w-[33px]"><CubeMesh c="#2a7bc8" /></Tb>
    <Tb w="w-[33px]"><XyzIcon /></Tb>
    <Tb w="w-[33px]"><ProbeIcon /></Tb>
    <Tb w="w-[33px]"><AbcIcon /></Tb>
    <TbSep m="ml-[4px] mr-[5px]" />
    <Tb w="w-[33px]"><ChartIcon /></Tb>
    <TbSep m="ml-[3px] mr-[11px]" />
    <div className="w-[135px] flex items-center">
      <div className="w-[26px]"><ClipboardIcon /></div>
      <span>Clipboard</span>
      <Arrow />
    </div>
    <span className="w-[83px]">[ Empty ]</span>
    <TbSep m="mr-[10px]" />
    <div className="w-[111px] flex items-center">
      <div className="w-[27px]"><ExtendIcon /></div>
      <span>Extend</span>
      <Arrow />
    </div>
    <div className="w-[128px] flex items-center">
      <div className="w-[25px]"><PinGold /></div>
      <span>Select By</span>
      <Arrow />
    </div>
    <div className="w-[115px] flex items-center">
      <div className="w-[26px]"><ConvertIcon /></div>
      <span>Convert</span>
      <Arrow />
    </div>
    <div className="mt-[12px]"><SmallCaret /></div>
  </div>
);

// ---------- mesh drawing ----------
const meshLines = () => {
  const ys: number[] = [];
  let y = 0;
  let step = 69;
  while (step > 1.9) {
    y += step;
    step *= 0.926;
    ys.push(y);
  }
  return ys;
};

const MeshPlot = () => {
  const ys = meshLines();
  const xs = Array.from({ length: 29 }, (_, i) => (i + 1) * 31.03);
  return (
    <svg width="932" height="932" viewBox="-1 -1 932 932" className="absolute left-[621px] top-[161px]">
      <rect x="0" y="0" width="930" height="930" fill="#939393" />
      {ys.map((v, i) => (
        <path key={v} d={`M0 ${v} H930`} stroke="#0c0c0c" strokeWidth={v > 780 ? 1.6 : i % 2 ? 2.4 : 2} opacity={0.9} />
      ))}
      {xs.map((v, i) => (
        <path key={v} d={`M${v} 0 V906`} stroke={i % 3 === 2 ? '#111' : '#262626'} strokeWidth={i % 3 === 2 ? 2 : 3} opacity={i % 3 === 2 ? 1 : 0.8} />
      ))}
      <rect x="0" y="906" width="930" height="24" fill="#000" />
      <rect x="0" y="0" width="930" height="930" fill="none" stroke="#111" strokeWidth="1.8" />
    </svg>
  );
};

const Triad = () => (
  <svg width="190" height="200" viewBox="2370 1190 190 200" className="absolute left-[1982px] top-[945px]">
    <defs>
      <linearGradient id="gs" x1="0" x2="1" y1="0" y2="0">
        <stop offset="0" stopColor="#0f6a0f" />
        <stop offset="0.5" stopColor="#189018" />
        <stop offset="1" stopColor="#0a500a" />
      </linearGradient>
      <linearGradient id="rs" x1="0" x2="0" y1="0" y2="1">
        <stop offset="0" stopColor="#a00000" />
        <stop offset="0.4" stopColor="#d81010" />
        <stop offset="1" stopColor="#800000" />
      </linearGradient>
      <radialGradient id="bs" cx="0.7" cy="0.3" r="0.8">
        <stop offset="0" stopColor="#0000e8" />
        <stop offset="1" stopColor="#000050" />
      </radialGradient>
      <radialGradient id="cs" cx="0.65" cy="0.3" r="0.8">
        <stop offset="0" stopColor="#00e6e6" />
        <stop offset="1" stopColor="#0e7f80" />
      </radialGradient>
    </defs>
    <rect x="2397" y="1258" width="7" height="90" fill="url(#gs)" />
    <path d="M2400 1229 L2413 1259 H2388 Z" fill="#0c8a0c" />
    <rect x="2405" y="1349" width="92" height="8" fill="url(#rs)" />
    <path d="M2495 1341 L2525 1353 L2495 1365 Z" fill="#d80b0b" />
    <circle cx="2400" cy="1353" r="12.5" fill="url(#bs)" />
    <circle cx="2458" cy="1295" r="13" fill="url(#cs)" />
    <text x="2404" y="1209" textAnchor="middle" fontSize="17" fill="#1cb94a" fontFamily="Liberation Sans">Y</text>
    <text x="2549" y="1352" textAnchor="middle" fontSize="17" fill="#ef3a3a" fontFamily="Liberation Sans">X</text>
  </svg>
);

const ScaleBar = () => (
  <div className="absolute left-[761px] top-[1145px] w-[652px] text-[18px] leading-[22px] text-[#222] font-['Liberation_Sans',sans-serif]">
    <div className="relative h-[22px]">
      <span className="absolute left-0 -translate-x-1/2">0.000</span>
      <span className="absolute left-[324px] -translate-x-1/2">0.350</span>
      <span className="absolute left-[628px] whitespace-nowrap">0.700 (m)</span>
    </div>
    <div className="w-[652px] h-[25px] flex border border-[#999] mt-[1px]">
      <div className="w-[163px] bg-black" />
      <div className="w-[161px] bg-white" />
      <div className="w-[164px] bg-black" />
      <div className="flex-1 bg-white" />
    </div>
    <div className="relative h-[22px] mt-[11px]">
      <span className="absolute left-[161px] -translate-x-1/2">0.175</span>
      <span className="absolute left-[488px] -translate-x-1/2">0.525</span>
    </div>
  </div>
);

const AnsysLogo = () => (
  <div className="absolute right-[10px] top-[5px] w-[190px] flex flex-col items-end text-white font-['Lato','Liberation_Sans',sans-serif] font-black">
    <span className="text-[64px] leading-[62px] tracking-[-1px] whitespace-nowrap">Ansys</span>
    <span className="text-[28px] leading-[25px] mt-[2px] tracking-[-1px] whitespace-nowrap">2024 R1</span>
    <div className="w-[164px] h-[3px] bg-[#dde4f7] mt-[6px] mr-[3px]" />
    <span className="text-[28px] leading-[25px] mt-[9px] mr-[22px] tracking-[-0.4px] whitespace-nowrap">STUDENT</span>
  </div>
);

const StatusBar = () => (
  <div className="h-[29px] bg-[#0078d0] border-t border-[#9fc8ea] flex items-center pl-[1796px] text-[17px] text-[#e8f2fb] whitespace-nowrap shrink-0">
    <svg width="26" height="28" viewBox="0 0 26 28" className="mr-[2px]">
      <path d="M1 7 H23 V20 H10 L6 27 V20 H1 Z" fill="#f2c81f" />
      <rect x="9" y="1" width="7" height="18" rx="3.5" fill="#f6e6a0" stroke="#222" strokeWidth="1.5" />
    </svg>
    <span className="w-[133px]">No Messages</span>
    <span className="w-[138px]">No Selection</span>
    <div className="w-[19px]">
      <svg width="12" height="8" viewBox="0 0 12 8"><path d="M6 0 L12 8 H0 Z" fill="#fff" /></svg>
    </div>
    <span className="w-[228px] tracking-[0.4px]">Metric (m, kg, N, s, V, A)</span>
    <span className="w-[87px]">Degrees</span>
    <span className="w-[65px]">rad/s</span>
    <span>Celsius</span>
  </div>
);

const App = () => (
  <div className="w-[2560px] h-[1540px] flex flex-col overflow-hidden bg-[#eeeef2] font-['Noto_Sans','Liberation_Sans',sans-serif] blur-[0.5px]">
    {/* title row */}
    <div className="h-[39px] flex items-center shrink-0 relative">
      <div className="ml-[12px]"><GearLogo /></div>
      <div className="w-px h-[30px] bg-[#d8d8dc] ml-[10px]" />
      <div className="ml-[9px]"><SaveIcon /></div>
      <div className="ml-[10px] -mt-[6px]"><SmallCaret /></div>
      <div className="ml-[88px] w-[81px] h-[39px] bg-[#d5e1f2] border-t-[6px] border-[#2a5a9f] flex items-center justify-center text-[15.5px] text-[#4a6c9c]">Context</div>
      <span className="ml-[8px] pt-[5px] text-[16.5px] text-[#555]">A : Fluid Flow (Fluent) - Meshing [CFD PrepPost, CFD PrepPost Pro, CFD Base]</span>
      <div className="flex-1" />
      <div className="w-[13px] h-[3px] bg-[#222] mr-[36px]" />
      <svg width="16" height="18" viewBox="0 0 16 18" className="mr-[35px]"><rect x="5" y="1" width="10" height="11" fill="none" stroke="#222" strokeWidth="1.6" /><rect x="1" y="6" width="10" height="11" fill="#eeeef2" stroke="#222" strokeWidth="2" /></svg>
      <svg width="17" height="17" viewBox="0 0 17 17" className="mr-[17px] -mt-[6px]"><path d="M1 1 L16 16 M16 1 L1 16" stroke="#222" strokeWidth="2.6" /></svg>
    </div>
    {/* tabs row */}
    <div className="h-[35px] flex items-end relative z-10 shrink-0 text-[16px] text-[#444]">
      <div className="w-[84px] h-[34px] mb-[1px] bg-[#0072c6] text-white flex items-center justify-center">File</div>
      <div className="w-[86px] h-[35px] ml-[12px] bg-[#fafafa] border border-b-0 border-[#d4d4d8] flex items-center justify-center text-[#333]">Home</div>
      <div className="h-[34px] pl-[22px] flex items-center whitespace-nowrap">
        <span className="w-[85px]">Mesh</span>
        <span className="w-[100px]">Display</span>
        <span className="w-[111px]">Selection</span>
        <span className="w-[134px]">Automation</span>
        <span className="w-[210px]">Learning and Support</span>
        <span>Motion</span>
      </div>
      <div className="flex-1" />
      <div className="w-[238px] h-[31px] mb-[2px] bg-white border-2 border-[#dcdce6] pl-[4px] flex items-center text-[14.5px] text-[#a8a8a8]">Quick Launch</div>
      <svg width="18" height="12" viewBox="0 0 18 12" className="mb-[10px] ml-[8px]"><path d="M1 11 L9 2 L17 11" fill="none" stroke="#d19a1c" strokeWidth="2.4" /></svg>
      <svg width="22" height="26" viewBox="0 0 22 26" className="mb-[4px] ml-[10px]"><path d="M1 4 L19 1 L21 21 L4 25 Z" fill="#f4f4f4" stroke="#555" /><path d="M8 12 L11 17 L17 5" fill="none" stroke="#d19a1c" strokeWidth="1.8" /></svg>
      <div className="w-[21px] h-[27px] mb-[4px] ml-[10px] rounded-full bg-[#4f9bf0] text-white text-[15px] font-bold flex items-center justify-center">?</div>
      <div className="mb-[14px] mr-[5px]"><Arrow dark /></div>
    </div>
    <Ribbon />
    {/* main body */}
    <div className="flex-1 flex min-h-0">
      <div className="w-[382px] flex flex-col shrink-0">
        <PaneHeader title="Outline" dark />
        <div className="h-[44px] flex bg-[#eeeef2] items-end shrink-0 text-[16.5px]">
          <div className="ml-[14px] mr-[10px] mb-[6px]"><Grip /></div>
          <div className="w-[148px] h-[37px] bg-white border border-[#dcdce6] flex items-center pl-[3px] pb-[2px] text-[#333] justify-between pr-[6px]">Name<Arrow dark /></div>
          <div className="w-[133px] ml-[2px] h-[37px] bg-white border border-[#dcdce6] flex items-center pl-[3px] pb-[2px] text-[#aaa] whitespace-nowrap overflow-hidden">Search Outline</div>
          <svg width="20" height="12" viewBox="0 0 20 12" className="ml-[9px] mb-[20px]"><path d="M2 2 L10 10 L18 2" fill="none" stroke="#d6a31d" strokeWidth="2.6" /></svg>
          <div className="ml-[7px] mb-[6px]"><SmallCaret /></div>
        </div>
        <OutlineTree />
        <Details />
      </div>
      <div className="w-[6px] shrink-0 bg-[#eeeef2]" />
      <div className="flex-1 flex flex-col min-w-0">
        <ViewToolbar />
        <div className="relative flex-1 bg-[linear-gradient(180deg,#6a8adb_0%,#ffffff_100%)] overflow-hidden">
          <AnsysLogo />
          <MeshPlot />
          <ScaleBar />
          <Triad />
          <svg width="14" height="14" viewBox="0 0 14 14" className="absolute left-[952px] top-[604px]"><path d="M7 1 V13 M1 7 H13" stroke="#6f8fd8" strokeWidth="1" /></svg>
        </div>
      </div>
    </div>
    <StatusBar />
    <div className="h-[12px] shrink-0 relative border-t-2 border-[#bdc3c9] bg-[linear-gradient(90deg,#e4eef8_0%,#dce2f3_25%,#e2ecf6_70%,#e2ecf6_100%)]">
      <div className="absolute left-[42px] top-[6px] w-[12px] h-[12px] rounded-full bg-[#c8201e]" />
      <div className="absolute left-[1192px] top-[6px] w-[12px] h-[12px] rounded-full bg-[#3b8de0]" />
      <div className="absolute left-[1818px] top-[7px] w-[50px] h-[10px] rounded-t-[5px] bg-white" />
    </div>
  </div>
);

export default App;
